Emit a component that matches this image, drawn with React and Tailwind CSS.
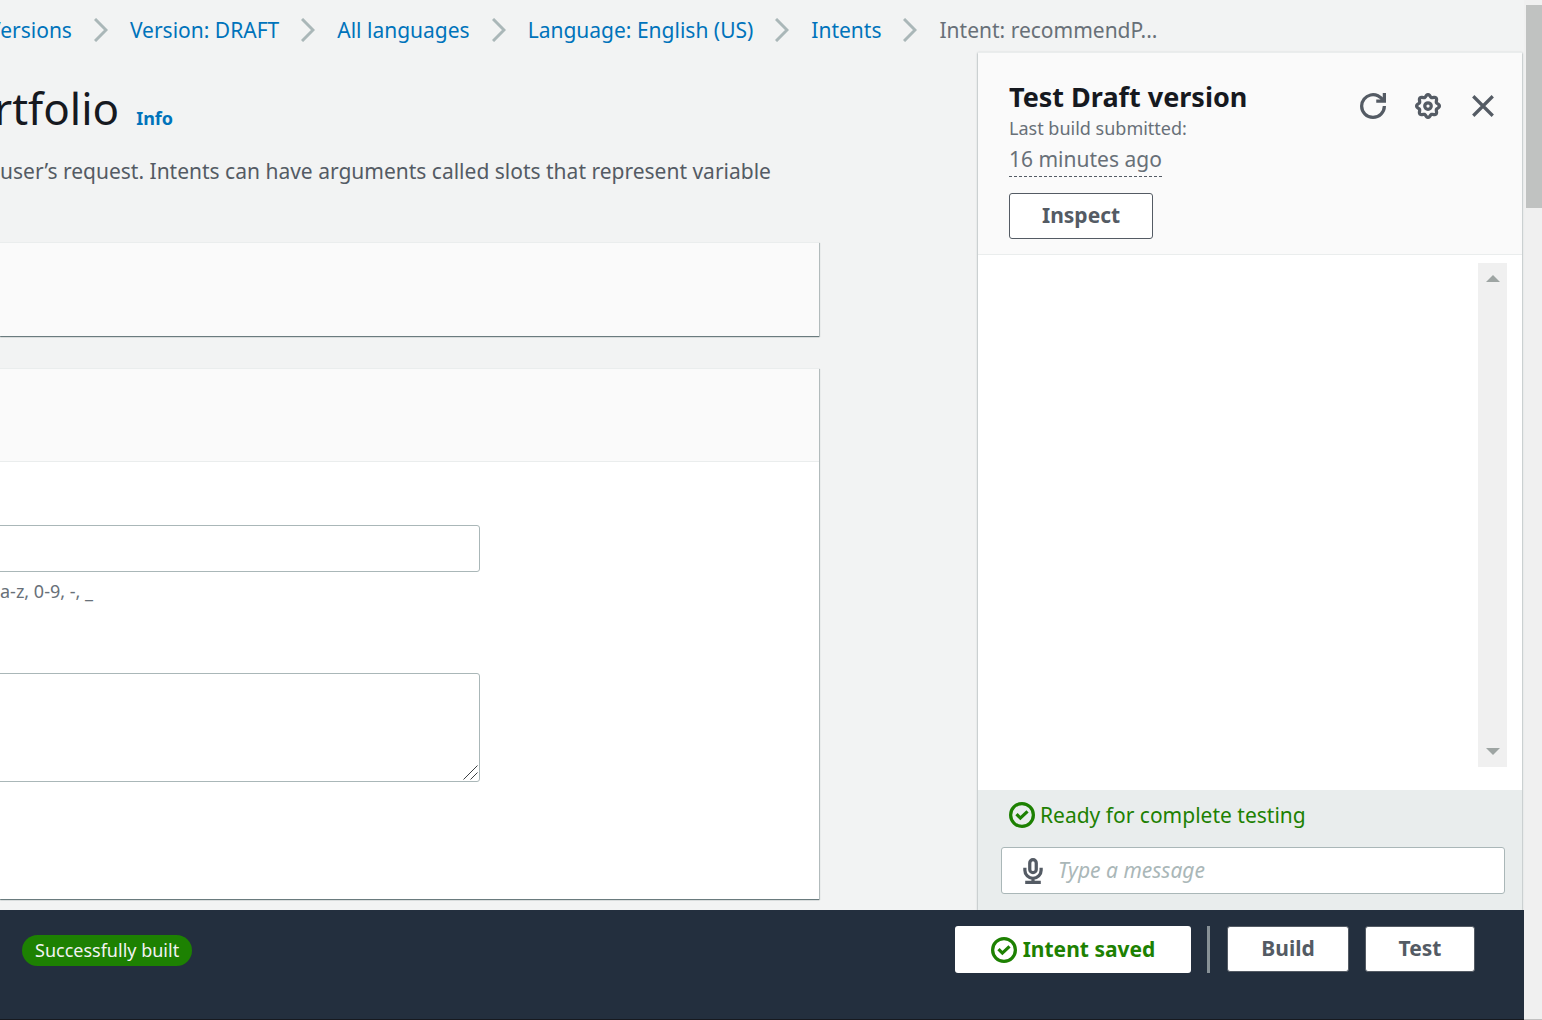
import React from "react";

const crumbs = ["Versions", "Version: DRAFT", "All languages", "Language: English (US)", "Intents"];

const gearPath =
  Array.from({ length: 96 }, (_, i) => {
    const a = (i / 96) * Math.PI * 2;
    const r = 6.3 + 0.7 * Math.cos(8 * a);
    return `${i ? "L" : "M"}${(8 + r * Math.cos(a)).toFixed(2)} ${(8 + r * Math.sin(a)).toFixed(2)}`;
  }).join("") + "Z";

function Icon({ children, className = "" }) {
  return (
    <svg
      viewBox="0 0 16 16"
      fill="none"
      stroke="currentColor"
      strokeWidth="2"
      aria-hidden="true"
      className={`size-[26px] shrink-0 ${className}`}
    >
      {children}
    </svg>
  );
}

function CheckIcon() {
  return (
    <Icon>
      <circle cx="8" cy="8" r="7" />
      <path d="M4.6 7.5 7 9.9l4.4-4.1" />
    </Icon>
  );
}

function Chevron() {
  return (
    <svg
      viewBox="0 0 14 24"
      fill="none"
      stroke="#aab7b8"
      strokeWidth="3"
      aria-hidden="true"
      className="h-6 w-3.5 shrink-0"
    >
      <path d="M1 1 12 12 1 23" />
    </svg>
  );
}

function Breadcrumbs() {
  return (
    <nav aria-label="Breadcrumbs" className="h-[52px] pt-3.5">
      <ol className="-ml-3 flex items-center gap-[22px] whitespace-nowrap text-[21px] leading-8">
        {crumbs.map((c) => (
          <li key={c} className="flex items-center gap-[22px]">
            <a href="#" className="text-[#0073bb]">{c}</a>
            <Chevron />
          </li>
        ))}
        <li className="text-[#687078]" aria-current="page">Intent: recommendP...</li>
      </ol>
    </nav>
  );
}

const card =
  "border-t border-[#eaeded] shadow-[0_1px_1px_0_rgba(0,28,36,0.45),1px_1px_1px_0_rgba(0,28,36,0.2)]";

function Editor() {
  return (
    <main className="mr-[159px] min-w-0 flex-1">
      <div className="-ml-1.5 flex items-baseline gap-[17px] pt-6">
        <h1 className="text-[44px] leading-[64px] text-[#16191f]">rtfolio</h1>
        <a href="#" className="text-lg font-bold text-[#0073bb]">Info</a>
      </div>
      <p className="mt-[15px] whitespace-nowrap text-[21px] leading-8 text-[#545b64]">
        user’s request. Intents can have arguments called slots that represent variable
      </p>
      <section className={`mt-[55px] h-[94px] bg-[#fafafa] ${card}`} />
      <section className={`mt-8 h-[531px] bg-white ${card}`}>
        <div className="h-[93px] border-b border-[#eaeded] bg-[#fafafa]" />
        <div className="-ml-2 w-[488px] pt-[63px]">
          <input
            aria-label="Intent name"
            className="block h-[47px] w-full rounded-[3px] border border-[#aab7b8] bg-white px-4 text-[21px]"
          />
          <p className="ml-2 mt-[5px] text-lg leading-7 text-[#687078]">a-z, 0-9, -, _</p>
          <div className="relative mt-[68px]">
            <textarea
              aria-label="Description"
              className="block h-[109px] w-full resize-none rounded-[3px] border border-[#aab7b8] bg-white px-4 text-[21px]"
            />
            <svg
              viewBox="0 0 15 15"
              fill="none"
              stroke="#3c4043"
              aria-hidden="true"
              className="pointer-events-none absolute bottom-0.5 right-0.5 size-[15px]"
            >
              <path d="M.5 14.5l14-14M7.5 14.5l7-7" />
            </svg>
          </div>
        </div>
      </section>
    </main>
  );
}

function TestPanel() {
  return (
    <aside className="relative mr-0.5 flex w-[544px] shrink-0 flex-col border-t border-[#eaeded] bg-white shadow-[0_1px_2px_0_rgba(0,28,36,0.5)]">
      <header className="flex h-[202px] items-start justify-between border-b border-[#eaeded] bg-[#fafafa] pl-[31px] pr-[26px] pt-[26px]">
        <div>
          <h2 className="text-[27px] font-bold leading-9 text-[#16191f]">Test Draft version</h2>
          <p className="text-lg leading-[26px] text-[#687078]">Last build submitted:</p>
          <p className="mt-0.5 w-fit border-b border-dashed border-[#545b64] pb-px text-[21px] leading-8 text-[#687078]">
            16 minutes ago
          </p>
          <button className="mt-4 h-[46px] rounded-[3px] border border-[#545b64] bg-white px-8 text-[21px] font-bold text-[#545b64]">
            Inspect
          </button>
        </div>
        <div className="mt-3.5 flex gap-[29px] text-[#545b64]">
          <button aria-label="Refresh">
            <Icon>
              <path d="M10 5h5V0" />
              <path d="M15 8a7 7 0 0 1-14 0 7 7 0 0 1 13.3-3" />
            </Icon>
          </button>
          <button aria-label="Settings">
            <Icon>
              <path d={gearPath} />
              <circle cx="8" cy="8" r="2" />
            </Icon>
          </button>
          <button aria-label="Close">
            <Icon>
              <path d="m2 2 12 12M14 2 2 14" />
            </Icon>
          </button>
        </div>
      </header>
      <div className="flex flex-1 justify-end pb-[23px] pr-[15px] pt-2">
        <div className="flex w-[29px] flex-col items-center justify-between bg-[#f0f0f0] py-3 text-[#9ea5a3]">
          <svg viewBox="0 0 14 7" fill="currentColor" className="h-[7px] w-3.5" aria-hidden="true">
            <path d="M0 7 7 0l7 7z" />
          </svg>
          <svg viewBox="0 0 14 7" fill="currentColor" className="h-[7px] w-3.5" aria-hidden="true">
            <path d="m0 0 7 7 7-7z" />
          </svg>
        </div>
      </div>
      <div className="h-[120px] bg-[#e9eded] pl-[23px] pr-[17px] pt-[9px]">
        <p className="ml-2 flex items-center gap-[5px] text-[21px] leading-8 text-[#1d8102]">
          <CheckIcon />
          Ready for complete testing
        </p>
        <div className="mt-4 flex h-[47px] items-center gap-3 rounded-[3px] border border-[#aab7b8] bg-white pl-[18px]">
          <button aria-label="Record voice message" className="text-[#545b64]">
            <Icon>
              <rect x="6" y="1" width="4" height="8" rx="2" />
              <path d="M3 6v1.5a5 5 0 0 0 10 0V6M8 12.5V15M3.2 15h9.6" />
            </Icon>
          </button>
          <input
            aria-label="Message"
            placeholder="Type a message"
            className="min-w-0 flex-1 bg-transparent text-[21px] outline-none placeholder:italic placeholder:text-[#aab7b8]"
          />
        </div>
      </div>
    </aside>
  );
}

function ActionBar() {
  return (
    <footer className="relative flex h-[110px] items-start border-b border-[#16191f] bg-[#232f3e] pl-[22px] pr-[49px] pt-4">
      <span className="mt-[9px] rounded-full bg-[#1d8102] px-[13px] text-lg leading-[31px] text-[#f2f3f3]">
        Successfully built
      </span>
      <div className="ml-auto flex items-start text-[21px] font-bold text-[#545b64]">
        <button className="flex h-[47px] w-[236px] items-center justify-center gap-1.5 rounded-[3px] bg-white text-[#1d8102]">
          <CheckIcon />
          Intent saved
        </button>
        <div className="ml-4 mr-[17px] h-[47px] w-[3px] bg-[#879196]" />
        <button className="h-[46px] w-[122px] rounded-[3px] border border-[#545b64] bg-white">Build</button>
        <button className="ml-4 h-[46px] w-[110px] rounded-[3px] border border-[#545b64] bg-white">Test</button>
      </div>
    </footer>
  );
}

export default function App() {
  return (
    <div className="flex min-h-screen overflow-hidden bg-[#f2f3f3] font-['Noto_Sans','Open_Sans',sans-serif]">
      <div className="flex min-w-0 flex-1 flex-col">
        <Breadcrumbs />
        <div className="flex flex-1">
          <Editor />
          <TestPanel />
        </div>
        <ActionBar />
      </div>
      <div className="w-[18px] shrink-0 border-b border-[#c1c1c1] bg-[#f0f0f0] pl-0.5 pt-[5px]">
        <div className="h-[203px] bg-[#c0c2c1]" />
      </div>
    </div>
  );
}
